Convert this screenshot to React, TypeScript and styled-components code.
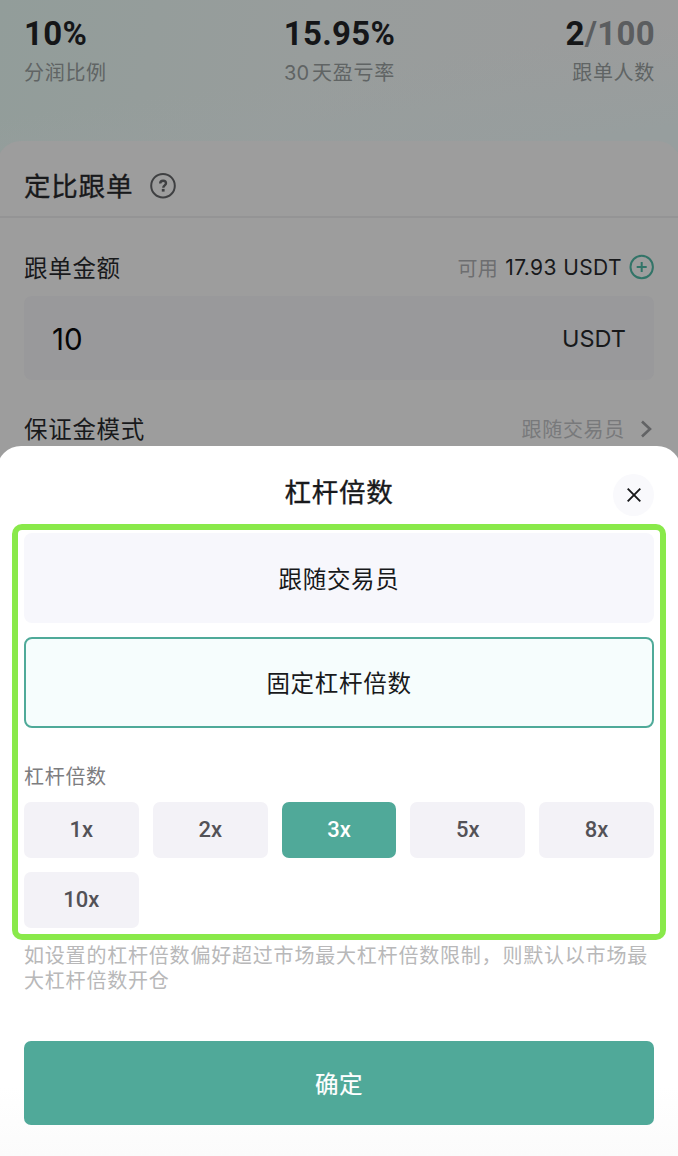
import React from "react";
import styled, { createGlobalStyle } from "styled-components";

const GlobalStyle = createGlobalStyle`
  * { box-sizing: border-box; }
  body {
    margin: 0;
    overflow: hidden;
    background: #9d9d9d;
    font-family: Inter, "Noto Sans CJK SC", sans-serif;
    color: #18191b;
  }
  button { font-family: inherit; border: 0; margin: 0; padding: 0; }
`;

const Screen = styled.div`
  width: 678px;
  height: 1156px;
  overflow: hidden;
  display: flex;
  flex-direction: column;
`;

const Hero = styled.header`
  height: 166px;
  flex: none;
  padding: 14px 23px 0 24px;
  display: grid;
  grid-template-columns: 1fr auto 1fr;
  background: linear-gradient(172deg, rgba(151, 160, 160, 0) 45%, #979e9e 85%),
    linear-gradient(100deg, #929d9a 0%, #989d9c 45%, #9a9c9c 80%, #9c9c9c 100%);
`;

const Stat = styled.div<{ $align: string }>`
  display: flex;
  flex-direction: column;
  align-items: ${(p) => p.$align};
`;

const StatValue = styled.div`
  height: 40px;
  line-height: 40px;
  font-family: Roboto, sans-serif;
  font-weight: 700;
  font-size: 33px;
  letter-spacing: 0.3px;
  color: #151618;
`;

const Muted = styled.span`
  color: #5b5d5f;
`;

const StatLabel = styled.div`
  height: 38px;
  line-height: 38px;
  font-size: 20px;
  letter-spacing: 0.7px;
  color: #606464;
`;

const Days = styled.span`
  margin-right: 3px;
  letter-spacing: 0;
`;

const Card = styled.section`
  flex: none;
  height: 320px;
  margin: -25px -3px 0;
  border-radius: 24px 24px 0 0;
  background: #9d9d9d;
`;

const CardHead = styled.div`
  height: 77px;
  padding: 14px 27px 0;
  display: flex;
  align-items: center;
  gap: 16px;
  border-bottom: 2px solid #949495;
`;

const CardTitle = styled.h2`
  margin: 0;
  font-weight: 400;
  -webkit-text-stroke: 0.35px currentColor;
  font-size: 26.5px;
  letter-spacing: 0.8px;
  line-height: 40px;
`;

const FieldRow = styled.div<{ $height: number; $top?: number }>`
  height: ${(p) => p.$height}px;
  padding: ${(p) => p.$top ?? 0}px 27px 0;
  display: flex;
  align-items: center;
  justify-content: space-between;
`;

const FieldLabel = styled.span`
  font-size: 23.5px;
  letter-spacing: 0.7px;
  line-height: 34px;
  padding-top: 2px;
`;

const Balance = styled.span`
  display: flex;
  align-items: center;
  font-size: 21px;
  letter-spacing: 0.4px;
  gap: 7px;
  margin-top: -1px;
  svg { display: block; }
`;

const BalanceLabel = styled.span`
  font-size: 20px;
  color: #6d6e70;
`;

const AmountInput = styled.div`
  height: 84px;
  margin: 0 27px;
  padding: 0 28px;
  border-radius: 8px;
  background: #99999b;
  display: flex;
  align-items: center;
  justify-content: space-between;
`;

const Amount = styled.span`
  font-size: 29.5px;
  color: #050506;
  padding-top: 1px;
`;

const Unit = styled.span`
  font-size: 23.5px;
`;

const Follow = styled.span`
  display: flex;
  align-items: center;
  gap: 14px;
  font-size: 20px;
  letter-spacing: 0.7px;
  color: #78797b;
`;

const Sheet = styled.section`
  position: relative;
  flex: none;
  height: 710px;
  margin: -15px -3px 0;
  padding: 0 14px;
  border-radius: 24px 24px 0 0;
  background: linear-gradient(#fff 0, #fff 640px, #fbfbfb 710px);
`;

const SheetHead = styled.div`
  height: 78px;
  padding: 14px 13px 0;
  display: grid;
  grid-template-columns: 41px 1fr 41px;
  align-items: center;
`;

const SheetTitle = styled.h1`
  grid-column: 2;
  margin: 0;
  text-align: center;
  font-weight: 400;
  -webkit-text-stroke: 0.35px currentColor;
  font-size: 26.5px;
  letter-spacing: 0.8px;
  line-height: 64px;
`;

const Close = styled.button`
  width: 41px;
  height: 42px;
  margin-top: 6px;
  border-radius: 50%;
  background: #f9f9fc;
  display: grid;
  place-items: center;
`;

const Frame = styled.div`
  height: 416px;
  margin: 0 1px;
  padding: 3px 6px 6px;
  border: 6px solid #89e94a;
  border-radius: 10px;
`;

const Option = styled.button<{ $active?: boolean }>`
  display: block;
  width: 100%;
  height: ${(p) => (p.$active ? 91 : 90)}px;
  padding-bottom: 1px;
  margin-bottom: 14px;
  border-radius: 8px;
  border: ${(p) => (p.$active ? "2px solid #4faa99" : "0")};
  background: ${(p) => (p.$active ? "#f6fdfd" : "#f7f7fc")};
  color: #18191b;
  font-size: 23.5px;
  letter-spacing: 0.7px;
`;

const GroupLabel = styled.div`
  height: 60px;
  padding-top: 15px;
  line-height: 40px;
  font-size: 20px;
  letter-spacing: 0.7px;
  color: #7d7d7f;
`;

const Chips = styled.div`
  display: grid;
  grid-template-columns: repeat(5, 1fr);
  gap: 14px;
`;

const Chip = styled.button<{ $active?: boolean }>`
  height: 56px;
  padding-bottom: 1px;
  border-radius: 7px;
  background: ${(p) => (p.$active ? "#50a999" : "#f3f2f7")};
  color: ${(p) => (p.$active ? "#fff" : "#535257")};
  font-family: Roboto, sans-serif;
  font-weight: 500;
  font-size: 22px;
`;

const Note = styled.p`
  height: 101px;
  margin: 0;
  padding: 4px 13px 0;
  font-size: 20px;
  letter-spacing: 0.8px;
  line-height: 24.5px;
  color: #b8b8b9;
`;

const Confirm = styled.button`
  display: block;
  width: 630px;
  height: 84px;
  margin: 0 13px;
  padding-bottom: 1px;
  border-radius: 7px;
  background: #50a999;
  color: #fff;
  font-weight: 400;
  -webkit-text-stroke: 0.2px currentColor;
  font-size: 23.5px;
  letter-spacing: 0.5px;
`;

const leverages = ["1x", "2x", "3x", "5x", "8x", "10x"];

export default function App() {
  return (
    <>
      <GlobalStyle />
      <Screen>
        <Hero>
          <Stat $align="flex-start">
            <StatValue>10%</StatValue>
            <StatLabel>分润比例</StatLabel>
          </Stat>
          <Stat $align="center">
            <StatValue>15.95%</StatValue>
            <StatLabel><Days>30</Days>天盈亏率</StatLabel>
          </Stat>
          <Stat $align="flex-end">
            <StatValue>2<Muted>/100</Muted></StatValue>
            <StatLabel>跟单人数</StatLabel>
          </Stat>
        </Hero>
        <Card>
          <CardHead>
            <CardTitle>定比跟单</CardTitle>
            <svg width="28" height="28" viewBox="0 0 28 28" fill="none" stroke="#3f4042">
              <circle cx="14" cy="13.7" r="11.8" strokeWidth="2" />
              <path d="M11.2 11.4c0-1.7 1.2-2.7 2.9-2.7s2.9 1.1 2.9 2.6c0 2-2.7 2.1-2.7 4.4" strokeWidth="2.4" />
              <path d="M14.2 16.9v2.7" strokeWidth="2.8" />
            </svg>
          </CardHead>
          <FieldRow $height={78} $top={21}>
            <FieldLabel>跟单金额</FieldLabel>
            <Balance>
              <BalanceLabel>可用</BalanceLabel>
              17.93 USDT
              <svg width="25" height="26" viewBox="0 0 25 26" fill="none" stroke="#327468" strokeWidth="2">
                <circle cx="12.7" cy="13" r="11.2" />
                <path d="M7.7 13h10M12.7 8v10" />
              </svg>
            </Balance>
          </FieldRow>
          <AmountInput>
            <Amount>10</Amount>
            <Unit>USDT</Unit>
          </AmountInput>
          <FieldRow $height={97}>
            <FieldLabel>保证金模式</FieldLabel>
            <Follow>
              跟随交易员
              <svg width="15" height="18" viewBox="0 0 15 18" fill="none" stroke="#626365" strokeWidth="2.6">
                <path d="M3 1.5l8 7.5-8 7.5" />
              </svg>
            </Follow>
          </FieldRow>
        </Card>
        <Sheet>
          <SheetHead>
            <SheetTitle>杠杆倍数</SheetTitle>
            <Close aria-label="关闭">
              <svg width="14" height="14" viewBox="0 0 14 14" stroke="#18191b" strokeWidth="1.9">
                <path d="M0.7 0.7l12.6 12.6M13.3 0.7L0.7 13.3" />
              </svg>
            </Close>
          </SheetHead>
          <Frame>
            <Option>跟随交易员</Option>
            <Option $active>固定杠杆倍数</Option>
            <GroupLabel>杠杆倍数</GroupLabel>
            <Chips>
              {leverages.map((x) => (
                <Chip key={x} $active={x === "3x"}>{x}</Chip>
              ))}
            </Chips>
          </Frame>
          <Note>如设置的杠杆倍数偏好超过市场最大杠杆倍数限制，则默认以市场最大杠杆倍数开仓</Note>
          <Confirm>确定</Confirm>
        </Sheet>
      </Screen>
    </>
  );
}
